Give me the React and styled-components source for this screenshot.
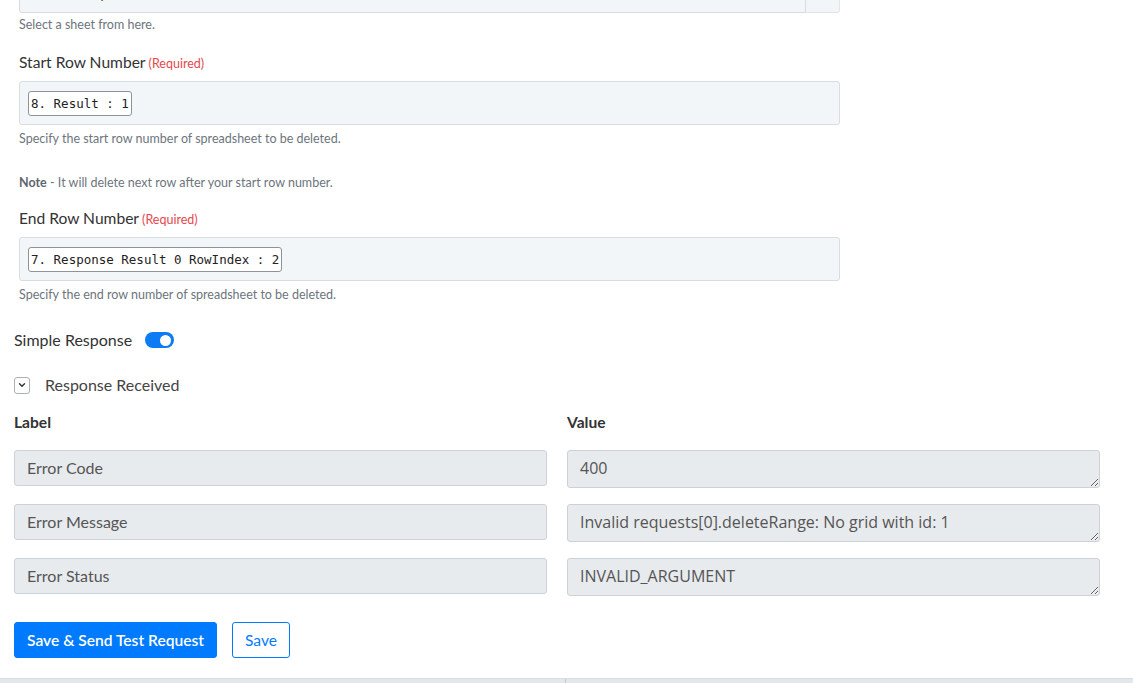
import React from "react";
import styled, { createGlobalStyle } from "styled-components";

const GlobalStyle = createGlobalStyle`
  * { box-sizing: border-box; }
  body {
    margin: 0;
    background: #fff;
    font-family: Lato, "Open Sans", sans-serif;
    color: #333;
    overflow: hidden;
  }
`;

const Page = styled.div`
  height: 683px;
  display: flex;
  flex-direction: column;
`;

const Content = styled.div`
  flex: 1;
  padding: 0 33px 0 14px;
`;

const FieldGroup = styled.div`
  width: 826px;
  padding-left: 5px;
`;

const SelectRow = styled.div`
  display: flex;
  margin-top: -28px;
  height: 41px;
`;

const SelectBox = styled.div`
  flex: 1;
  background: #f3f6f9;
  border: 1px solid #d6dbe1;
  border-radius: 3px 0 0 3px;
  padding: 10px 12px;
  font-size: 15px;
  color: #555;
`;

const SelectButton = styled.div`
  width: 34px;
  background: #f3f6f9;
  border: 1px solid #e1e5ea;
  border-left: none;
  border-radius: 0 3px 3px 0;
`;

const Help = styled.div`
  font-size: 12.5px;
  line-height: 16px;
  color: #6c757d;
  margin-top: ${(p) => p.$top || 6}px;
`;

const Note = styled(Help)`
  b {
    font-weight: 700;
    color: #5f6670;
  }
`;

const FieldLabel = styled.div`
  font-size: 15.6px;
  line-height: 20px;
  color: #333;
  margin-top: ${(p) => p.$top}px;
  span {
    font-size: 12.5px;
    color: #e5484d;
    margin-left: 3px;
  }
`;

const TokenInput = styled.div`
  height: 44px;
  margin-top: 7px;
  background: #f3f6f9;
  border: 1px solid #d8dde3;
  border-radius: 3px;
  display: flex;
  align-items: center;
  padding-left: 8px;
`;

const Token = styled.span`
  font-family: "DejaVu Sans Mono", "Liberation Mono", monospace;
  font-size: 12.5px;
  line-height: 23px;
  color: #222;
  background: #fff;
  border: 1px solid #8d939a;
  border-radius: 3px;
  padding: 0 2px;
`;

const SwitchRow = styled.div`
  display: flex;
  align-items: center;
  gap: 13px;
  margin-top: 27px;
  font-size: 16px;
  line-height: 20px;
`;

const Switch = styled.span`
  width: 29px;
  height: 16px;
  border-radius: 8px;
  background: #0d7bf2;
  display: flex;
  align-items: center;
  justify-content: flex-end;
  padding-right: 3px;
  &::after {
    content: "";
    width: 11px;
    height: 11px;
    border-radius: 50%;
    background: #fff;
  }
`;

const CollapseRow = styled.div`
  display: flex;
  align-items: center;
  gap: 15px;
  margin-top: 25px;
  font-size: 16px;
  line-height: 20px;
  color: #444;
`;

const Chevron = styled.span`
  width: 16px;
  height: 17px;
  border: 1px solid #a9b0b8;
  border-radius: 3px;
  display: flex;
  align-items: center;
  justify-content: center;
`;

const Grid = styled.div`
  display: grid;
  grid-template-columns: 533px 533px;
  column-gap: 20px;
  row-gap: 16px;
  margin-top: 17px;
  align-items: start;
`;

const ColumnHead = styled.div`
  font-size: 15.6px;
  font-weight: 700;
  line-height: 20px;
  color: #333;
  margin-bottom: 2px;
`;

const LabelBox = styled.div`
  height: 36px;
  background: #e8ebee;
  border: 1px solid #cdd2d8;
  border-radius: 3px;
  padding: 0 12px 2px;
  display: flex;
  align-items: center;
  font-size: 16px;
  color: #555;
`;

const ValueBox = styled.textarea`
  display: block;
  width: 100%;
  height: 38px;
  background: #e8ebee;
  border: 1px solid #cdd2d8;
  border-radius: 3px;
  padding: 6px 12px;
  font-family: "Open Sans", "Noto Sans", sans-serif;
  font-size: 16px;
  line-height: 22px;
  color: #555;
  overflow: hidden;
  outline: none;
`;

const Actions = styled.div`
  display: flex;
  gap: 15px;
  margin-top: 26px;
`;

const Button = styled.button`
  height: 36px;
  padding: 0 12px;
  border-radius: 3px;
  font-family: Lato, sans-serif;
  font-size: 15.6px;
  font-weight: ${(p) => (p.$primary ? 600 : 400)};
  border: 1px solid #007bff;
  background: ${(p) => (p.$primary ? "#007bff" : "#fff")};
  color: ${(p) => (p.$primary ? "#fff" : "#007bff")};
`;

const BottomEdge = styled.div`
  height: 5px;
  background: #e3e7ec;
  border-top: 1px solid #d7dce2;
  display: grid;
  grid-template-columns: 566px 1fr;
  span {
    border-right: 1px solid #c3c9d0;
  }
`;

const rows = [
  ["Error Code", "400"],
  ["Error Message", "Invalid requests[0].deleteRange: No grid with id: 1"],
  ["Error Status", "INVALID_ARGUMENT"],
];

export default function App() {
  return (
    <Page>
      <GlobalStyle />
      <Content>
        <FieldGroup>
          <SelectRow>
            <SelectBox>Sheet Daily</SelectBox>
            <SelectButton />
          </SelectRow>
          <Help $top={4}>Select a sheet from here.</Help>

          <FieldLabel $top={19}>
            Start Row Number<span>(Required)</span>
          </FieldLabel>
          <TokenInput>
            <Token>8. Result : 1</Token>
          </TokenInput>
          <Help>Specify the start row number of spreadsheet to be deleted.</Help>
          <Note $top={28}>
            <b>Note</b> - It will delete next row after your start row number.
          </Note>

          <FieldLabel $top={17}>
            End Row Number<span>(Required)</span>
          </FieldLabel>
          <TokenInput>
            <Token>7. Response Result 0 RowIndex : 2</Token>
          </TokenInput>
          <Help>Specify the end row number of spreadsheet to be deleted.</Help>
        </FieldGroup>

        <SwitchRow>
          Simple Response
          <Switch />
        </SwitchRow>

        <CollapseRow>
          <Chevron>
            <svg width="10" height="10" viewBox="0 0 10 10" fill="none">
              <path d="M2.5 3.8L5 6.3l2.5-2.5" stroke="#333" strokeWidth="1.4" strokeLinecap="round" strokeLinejoin="round" />
            </svg>
          </Chevron>
          Response Received
        </CollapseRow>

        <Grid>
          <ColumnHead>Label</ColumnHead>
          <ColumnHead>Value</ColumnHead>
          {rows.map(([label, value]) => (
            <React.Fragment key={label}>
              <LabelBox>{label}</LabelBox>
              <ValueBox readOnly value={value} />
            </React.Fragment>
          ))}
        </Grid>

        <Actions>
          <Button $primary>Save &amp; Send Test Request</Button>
          <Button>Save</Button>
        </Actions>
      </Content>
      <BottomEdge>
        <span />
      </BottomEdge>
    </Page>
  );
}
